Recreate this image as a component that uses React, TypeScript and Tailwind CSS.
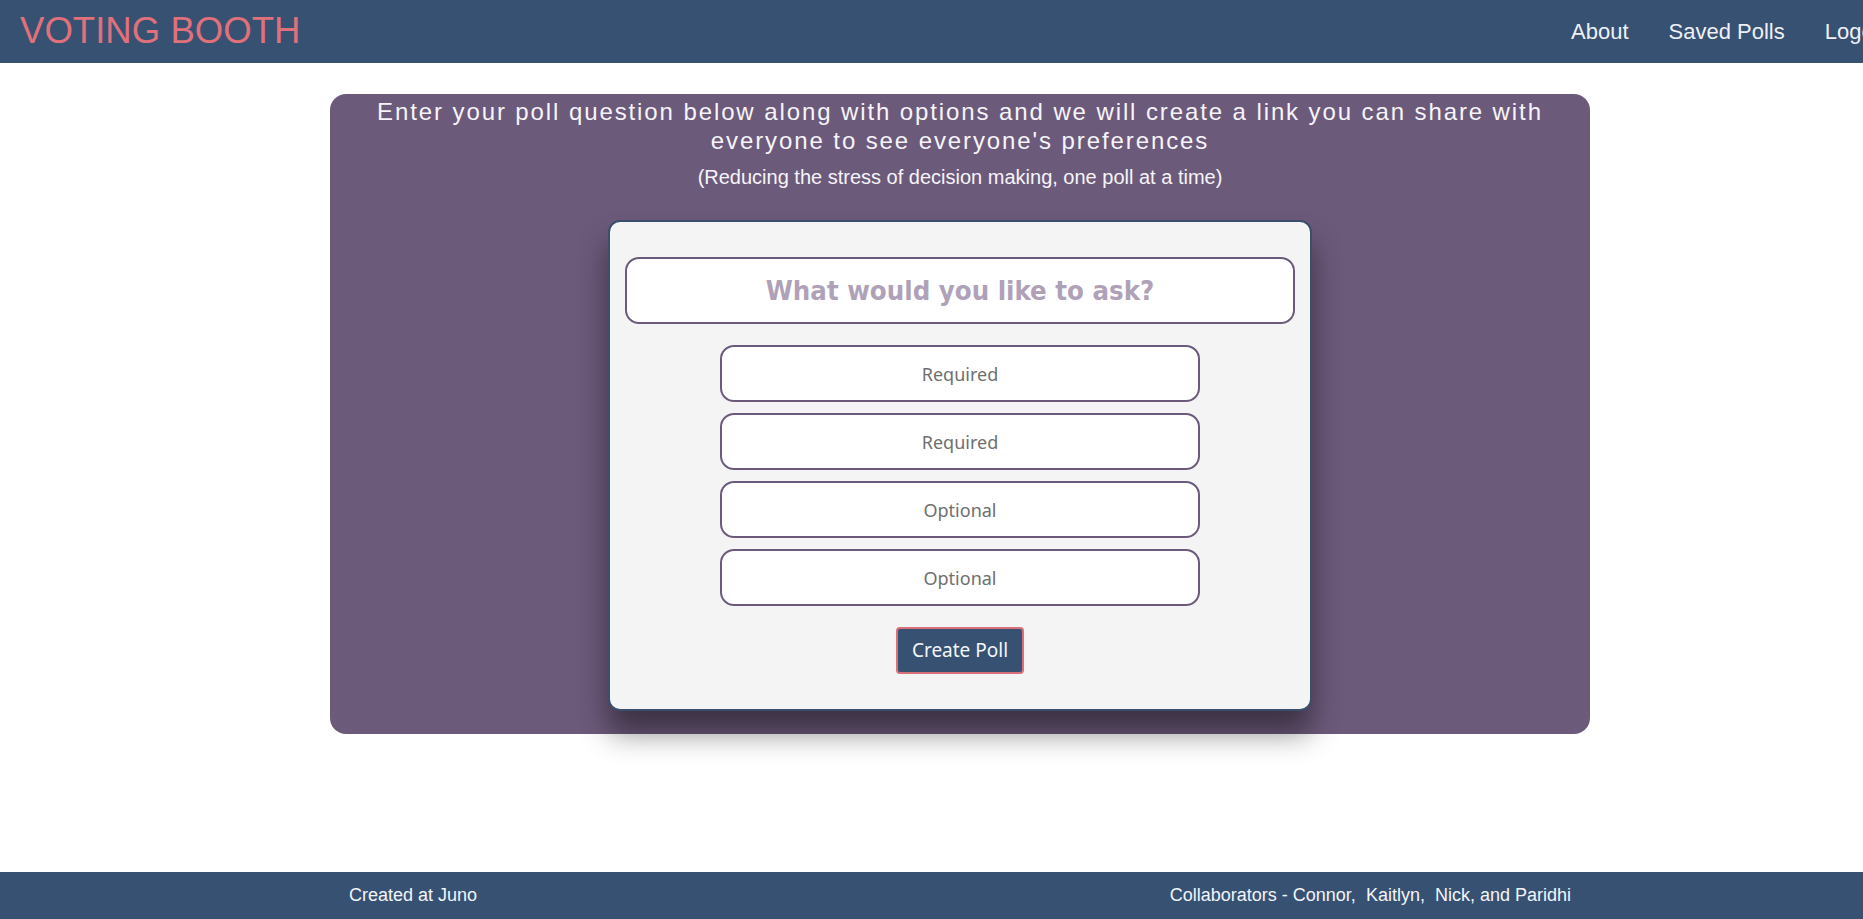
const navLinks = ["About", "Saved Polls", "Logout"]
const options = ["Required", "Required", "Optional", "Optional"]

export default function App() {
  return (
    <div className="h-screen w-full overflow-hidden bg-white">
      <div className="w-[1920px] min-h-[919px] flex flex-col font-['Liberation_Sans',Arial,sans-serif]">
        <header className="h-[63px] shrink-0 bg-[#365172] flex items-center justify-between pl-[20px] pr-[28px]">
          <h1 className="text-[36.6px] leading-none text-[#e0707a]">VOTING BOOTH</h1>
          <nav className="flex items-center gap-[40px]">
            {navLinks.map((link) => (
              <a key={link} href="#" className="text-[22px] text-[#eef0f5]">
                {link}
              </a>
            ))}
          </nav>
        </header>

        <main className="flex-1">
          <section className="mx-auto mt-[31px] w-[1260px] rounded-[16px] bg-[#6c5a7b] pt-[3px] pb-[23px] flex flex-col items-center text-white">
            <h2 className="px-[40px] text-center text-[24px] leading-[29px] tracking-[1.9px] text-[#f6f4f8]">
              Enter your poll question below along with options and we will create a link you can share with
              everyone to see everyone's preferences
            </h2>
            <p className="mt-[11px] text-[20px] leading-[23px] text-[#f6f4f8]">
              (Reducing the stress of decision making, one poll at a time)
            </p>

            <form className="mt-[31px] w-[704px] rounded-[12px] border-2 border-[#3b4e6e] bg-[#f4f4f4] pt-[35px] px-[15px] pb-[35px] flex flex-col items-center shadow-[0_22px_30px_rgba(0,0,0,0.45)] font-['DejaVu_Sans_Condensed','DejaVu_Sans',sans-serif]">
              <input
                type="text"
                placeholder="What would you like to ask?"
                className="w-full h-[67px] rounded-[14px] border-2 border-[#6b5a7b] bg-white text-center text-[27.3px] font-bold outline-none placeholder:text-[#afa2b8]"
              />
              <div className="mt-[21px] flex flex-col gap-[11px]">
                {options.map((opt, i) => (
                  <input
                    key={i}
                    type="text"
                    placeholder={opt}
                    className="w-[480px] h-[57px] rounded-[14px] border-2 border-[#6b5a7b] bg-white text-center text-[18px] font-['Noto_Sans',sans-serif] outline-none placeholder:text-[#6f6f6f]"
                  />
                ))}
              </div>
              <button
                type="button"
                className="mt-[21px] w-[128px] h-[47px] rounded-[4px] border-2 border-[#d8707a] bg-[#365172] text-[19px] text-[#f4f6fa] font-['Noto_Sans',sans-serif]"
              >
                Create Poll
              </button>
            </form>
          </section>
        </main>

        <footer className="h-[47px] shrink-0 bg-[#365172] flex items-center justify-between px-[349px] text-[18px] text-[#f2f4f8]">
          <span>Created at Juno</span>
          <span>Collaborators - Connor,{"\u00a0 "}Kaitlyn,{"\u00a0 "}Nick, and Paridhi</span>
        </footer>
      </div>
    </div>
  )
}
